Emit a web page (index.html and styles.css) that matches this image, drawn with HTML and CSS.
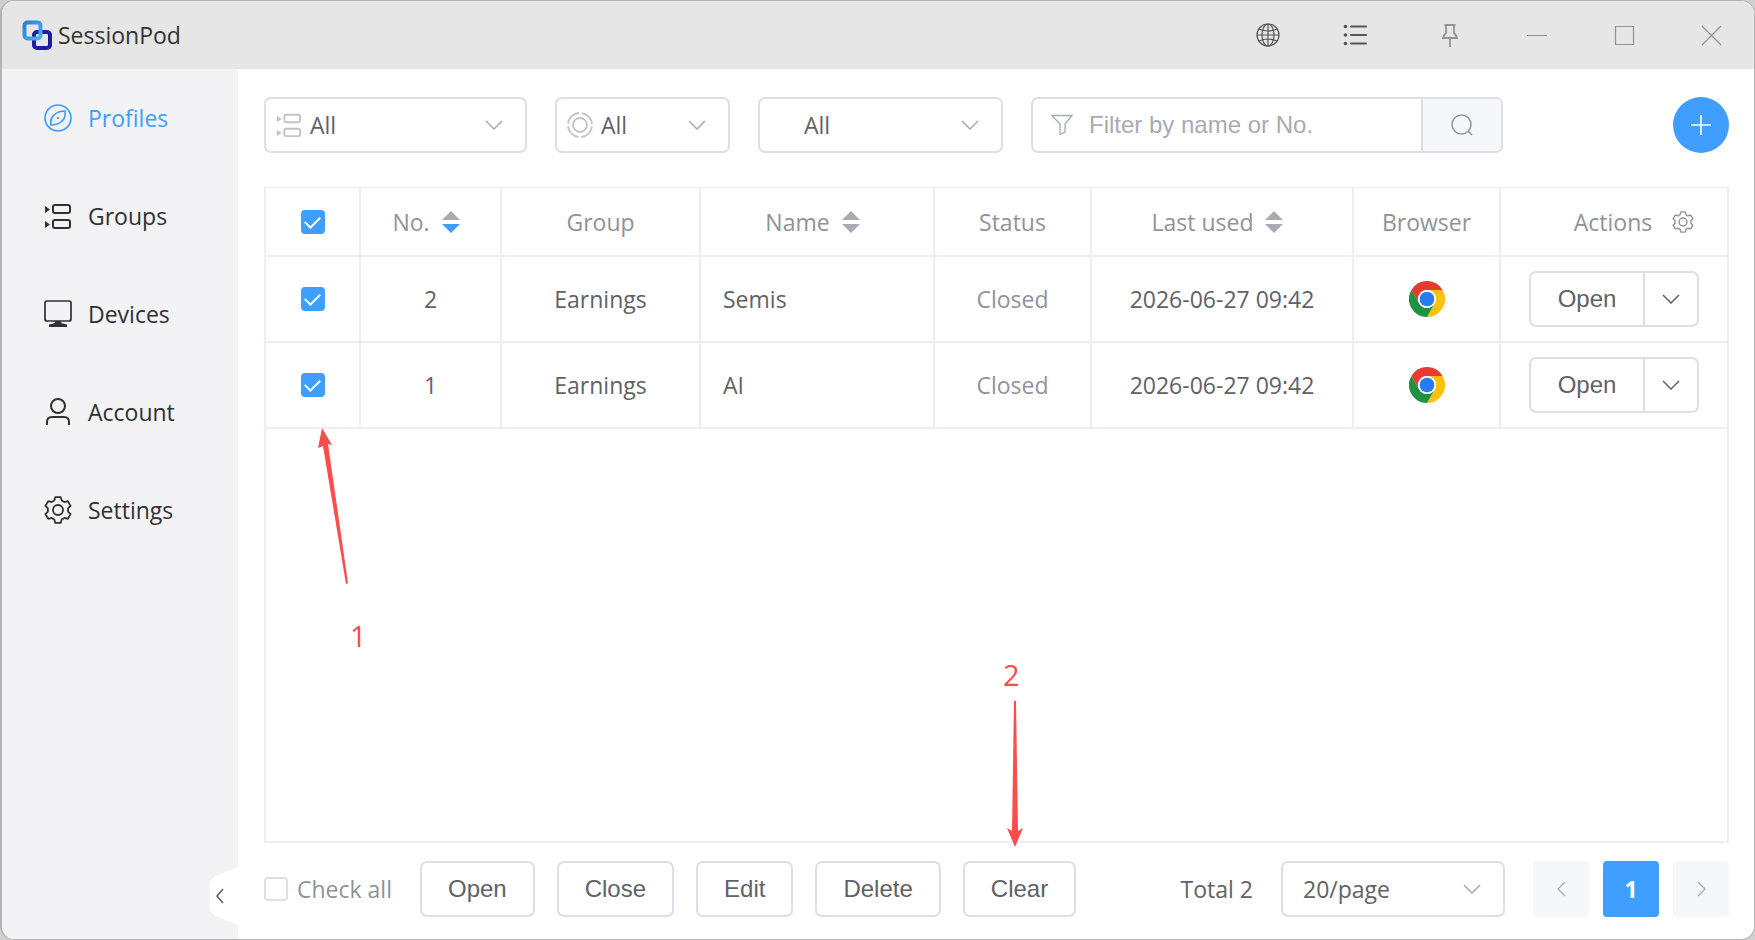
FILE: index.html
```html
<!DOCTYPE html>
<html lang="en">
<head>
    <meta charset="UTF-8">
    <meta name="viewport" content="width=device-width, initial-scale=1.0">
    <title>SessionPod</title>
    <link rel="stylesheet" href="styles.css">
</head>
<body>
    <!-- Shared icons -->
    <svg class="icon-defs" aria-hidden="true">
        <symbol id="icon-groups" viewBox="0 0 28 28">
            <path d="M1 4l5 3.500-5 3.500zM1 19l5 3.500-5 3.500z" fill="currentColor"/>
            <rect x="9" y="3" width="17" height="8" rx="2" fill="none" stroke="currentColor" stroke-width="2"/>
            <rect x="9" y="18" width="17" height="8" rx="2" fill="none" stroke="currentColor" stroke-width="2"/>
        </symbol>
        <symbol id="icon-gear" viewBox="0 0 28 28">
            <path d="M11.300 1.100h5.400l1 3.400 2.700 1.600 3.400-.9 2.800 4.700-2.500 2.500v3.200l2.500 2.500-2.800 4.700-3.400-.9-2.700 1.600-1 3.400h-5.400l-1-3.400-2.700-1.600-3.400.9-2.800-4.700 2.500-2.500v-3.200L1.400 9.900l2.800-4.700 3.400.9 2.700-1.600z" fill="none" stroke="currentColor" stroke-width="1.800" stroke-linejoin="round"/>
            <circle cx="14" cy="14" r="5" fill="none" stroke="currentColor" stroke-width="1.800"/>
        </symbol>
        <symbol id="icon-down" viewBox="0 0 18 10">
            <path d="M1 1l8 8 8-8" fill="none" stroke="currentColor" stroke-width="1.500"/>
        </symbol>
        <symbol id="icon-sort" viewBox="0 0 18 22">
            <path class="sort-up" d="M0 9l9-9 9 9z"/>
            <path class="sort-down" d="M0 13h18l-9 9z"/>
        </symbol>
        <symbol id="icon-chrome" viewBox="0 0 48 48">
            <path d="M3.200 12A24 24 0 0 1 44.800 12H24A12 12 0 0 0 13.600 30z" fill="#e63b2e"/>
            <path d="M44.800 12A24 24 0 0 1 24 48L34.400 30A12 12 0 0 0 24 12z" fill="#fcc013"/>
            <path d="M24 48A24 24 0 0 1 3.200 12L13.600 30A12 12 0 0 0 34.400 30z" fill="#1e9142"/>
            <circle cx="24" cy="24" r="12" fill="#fff"/>
            <circle cx="24" cy="24" r="9.800" fill="#2a7bf0"/>
        </symbol>
    </svg>

    <div class="window">
        <header class="titlebar">
            <svg class="logo" viewBox="0 0 30 30" aria-hidden="true">
                <defs>
                    <linearGradient id="logo-light" x1="0" y1="0" x2="1" y2="1">
                        <stop offset="0" stop-color="#2d7fd6"/>
                        <stop offset="1" stop-color="#45b4f2"/>
                    </linearGradient>
                </defs>
                <rect x="12" y="12" width="16" height="16" rx="3" fill="none" stroke="#1f1f9e" stroke-width="4"/>
                <rect x="2.500" y="2.500" width="16" height="16" rx="3" fill="none" stroke="url(#logo-light)" stroke-width="4"/>
            </svg>
            <h1>SessionPod</h1>
            <div class="title-tools">
                <button class="title-btn dark" aria-label="Language">
                    <svg width="24" height="24" viewBox="0 0 24 24" fill="none" stroke="currentColor" stroke-width="1.200">
                        <circle cx="12" cy="12" r="11"/>
                        <ellipse cx="12" cy="12" rx="6" ry="11"/>
                        <path d="M1 12h22M12 1v22M3 6q9 4 18 0M3 18q9-4 18 0"/>
                    </svg>
                </button>
                <button class="title-btn dark" aria-label="List">
                    <svg width="24" height="24" viewBox="0 0 24 24" stroke="currentColor" stroke-width="2" stroke-linecap="round">
                        <path d="M8 3.500h15M8 12h15M8 20.500h15"/>
                        <circle cx="2.500" cy="3.500" r=".8"/>
                        <circle cx="2.500" cy="12" r=".8"/>
                        <circle cx="2.500" cy="20.500" r=".8"/>
                    </svg>
                </button>
            </div>
            <button class="title-btn" aria-label="Pin">
                <svg width="24" height="24" viewBox="0 0 24 24" fill="none" stroke="currentColor" stroke-width="1.800">
                    <path d="M6.500 2h11M8 2v8q-2 2-3 5h14q-1-3-3-5V2M12 15v9"/>
                </svg>
            </button>
            <button class="title-btn" aria-label="Minimize">
                <svg width="24" height="24" viewBox="0 0 24 24" stroke="currentColor" stroke-width="1.200"><path d="M2 12.500h20"/></svg>
            </button>
            <button class="title-btn" aria-label="Maximize">
                <svg width="24" height="24" viewBox="0 0 24 24" fill="none" stroke="currentColor" stroke-width="1.200"><path d="M3.500 3.500h18v18h-18z"/></svg>
            </button>
            <button class="title-btn" aria-label="Close window">
                <svg width="24" height="24" viewBox="0 0 24 24" stroke="currentColor" stroke-width="1.200"><path d="M3 3l19 19M22 3L3 22"/></svg>
            </button>
        </header>

        <aside class="sidebar">
            <nav>
                <ul>
                    <li><a href="#profiles" class="active">
                        <svg viewBox="0 0 28 28" fill="none" stroke="currentColor" stroke-width="1.700">
                            <circle cx="14" cy="14" r="13"/>
                            <path d="M7 21q-1-7 3-10 4-4 11-4 1 7-3 10-4 4-11 4z"/>
                            <circle cx="14" cy="14" r=".8" fill="currentColor" stroke-width="1"/>
                        </svg>Profiles</a></li>
                    <li><a href="#groups"><svg><use href="#icon-groups"/></svg>Groups</a></li>
                    <li><a href="#devices">
                        <svg viewBox="0 0 28 28">
                            <rect x="1" y="1" width="26" height="20" rx="2" fill="none" stroke="currentColor" stroke-width="1.700"/>
                            <path d="M11 21h6v2l6 1.500V27H5v-2.500L11 23z" fill="currentColor"/>
                        </svg>Devices</a></li>
                    <li><a href="#account">
                        <svg viewBox="0 0 28 28" fill="none" stroke="currentColor" stroke-width="2">
                            <circle cx="14" cy="8" r="7"/>
                            <path d="M3 27v-3q0-5 5-5h12q5 0 5 5v3"/>
                        </svg>Account</a></li>
                    <li><a href="#settings"><svg><use href="#icon-gear"/></svg>Settings</a></li>
                </ul>
            </nav>
            <button class="collapse-btn" aria-label="Collapse sidebar">
                <svg width="8" height="16" viewBox="0 0 8 16" fill="none" stroke="currentColor" stroke-width="1.600"><path d="M7 1L1 8l6 7"/></svg>
            </button>
        </aside>

        <main>
            <div class="toolbar">
                <div class="select-box filter-group">
                    <svg class="lead"><use href="#icon-groups"/></svg>
                    <select aria-label="Group"><option>All</option></select>
                    <svg class="chevron"><use href="#icon-down"/></svg>
                </div>
                <div class="select-box filter-status">
                    <svg class="lead" viewBox="0 0 28 28" fill="none" stroke="currentColor" stroke-width="2">
                        <circle cx="14" cy="14" r="7.500"/>
                        <circle cx="14" cy="14" r="13" stroke-dasharray="17.420 3" stroke-dashoffset="-1.500"/>
                    </svg>
                    <select aria-label="Status"><option>All</option></select>
                    <svg class="chevron"><use href="#icon-down"/></svg>
                </div>
                <div class="select-box filter-browser">
                    <select aria-label="Browser"><option>All</option></select>
                    <svg class="chevron"><use href="#icon-down"/></svg>
                </div>
                <form class="search">
                    <svg width="22" height="22" viewBox="0 0 22 22" fill="none" stroke="currentColor" stroke-width="1.300">
                        <path d="M1 1.500h20L14 10v8l-5 2.500V10z"/>
                    </svg>
                    <input type="text" placeholder="Filter by name or No." aria-label="Filter by name or No.">
                    <button type="button" aria-label="Search">
                        <svg width="22" height="22" viewBox="0 0 22 22" fill="none" stroke="currentColor" stroke-width="1.500">
                            <circle cx="10.500" cy="10.500" r="9.500"/>
                            <path d="M17 17l4 4"/>
                        </svg>
                    </button>
                </form>
                <button class="add-btn" aria-label="Add profile">
                    <svg width="22" height="22" viewBox="0 0 22 22" stroke="currentColor" stroke-width="1.600"><path d="M11 1v20M1 11h20"/></svg>
                </button>
            </div>

            <div class="table-wrap">
                <table>
                    <colgroup>
                        <col class="col-check">
                        <col class="col-no">
                        <col class="col-group">
                        <col>
                        <col class="col-status">
                        <col class="col-used">
                        <col class="col-browser">
                        <col class="col-actions">
                    </colgroup>
                    <thead>
                        <tr>
                            <th><input type="checkbox" checked aria-label="Select all rows"></th>
                            <th><span class="sortable desc">No. <svg><use href="#icon-sort"/></svg></span></th>
                            <th>Group</th>
                            <th><span class="sortable">Name <svg><use href="#icon-sort"/></svg></span></th>
                            <th>Status</th>
                            <th><span class="sortable">Last used <svg><use href="#icon-sort"/></svg></span></th>
                            <th>Browser</th>
                            <th><span class="actions-head">Actions
                                <button aria-label="Column settings"><svg><use href="#icon-gear"/></svg></button>
                            </span></th>
                        </tr>
                    </thead>
                    <tbody>
                        <tr>
                            <td><input type="checkbox" checked aria-label="Select profile 2"></td>
                            <td>2</td>
                            <td>Earnings</td>
                            <td class="name">Semis</td>
                            <td class="closed">Closed</td>
                            <td>2026-06-27 09:42</td>
                            <td><svg class="browser" role="img" aria-label="Chrome"><use href="#icon-chrome"/></svg></td>
                            <td>
                                <div class="split-btn">
                                    <button>Open</button>
                                    <button aria-label="More actions"><svg class="chevron"><use href="#icon-down"/></svg></button>
                                </div>
                            </td>
                        </tr>
                        <tr>
                            <td><input type="checkbox" checked aria-label="Select profile 1"></td>
                            <td>1</td>
                            <td>Earnings</td>
                            <td class="name">AI</td>
                            <td class="closed">Closed</td>
                            <td>2026-06-27 09:42</td>
                            <td><svg class="browser" role="img" aria-label="Chrome"><use href="#icon-chrome"/></svg></td>
                            <td>
                                <div class="split-btn">
                                    <button>Open</button>
                                    <button aria-label="More actions"><svg class="chevron"><use href="#icon-down"/></svg></button>
                                </div>
                            </td>
                        </tr>
                    </tbody>
                </table>
            </div>

            <footer>
                <label class="check-all"><input type="checkbox"> Check all</label>
                <div class="bulk">
                    <button class="btn">Open</button>
                    <button class="btn">Close</button>
                    <button class="btn">Edit</button>
                    <button class="btn">Delete</button>
                    <button class="btn">Clear</button>
                </div>
                <span class="total">Total 2</span>
                <div class="select-box page-size">
                    <select aria-label="Page size"><option>20/page</option></select>
                    <svg class="chevron"><use href="#icon-down"/></svg>
                </div>
                <div class="pager">
                    <button disabled aria-label="Previous page">
                        <svg width="9" height="16" viewBox="0 0 9 16" fill="none" stroke="currentColor" stroke-width="1.300"><path d="M8 1L1 8l7 7"/></svg>
                    </button>
                    <button class="current">1</button>
                    <button disabled aria-label="Next page">
                        <svg width="9" height="16" viewBox="0 0 9 16" fill="none" stroke="currentColor" stroke-width="1.300"><path d="M1 1l7 7-7 7"/></svg>
                    </button>
                </div>
            </footer>
        </main>

        <!-- Step markers drawn over the window -->
        <div class="step step-one">
            <svg width="36" height="158" viewBox="0 0 36 158"><path d="M9 0l10 17-4-1L35 155l-2 1L10 18l-5 2z" fill="#fc4c4c"/></svg>
            <span>1</span>
        </div>
        <div class="step step-two">
            <span>2</span>
            <svg width="16" height="147" viewBox="0 0 16 147"><path d="M7 1h2l2 130 5-3-8 19-8-19 5 3z" fill="#fc4c4c"/></svg>
        </div>
    </div>
</body>
</html>
```
FILE: styles.css
```css
* {
    margin: 0;
    padding: 0;
    box-sizing: border-box;
}
body {
    font-family: "Open Sans", "Noto Sans", sans-serif;
    font-size: 23px;
    color: #606266;
    background-color: #d0d0d0;
}
button {
    font-family: "Liberation Sans", Arial, sans-serif;
    font-size: 24px;
    color: inherit;
    background: none;
    border: none;
    cursor: pointer;
}
svg {
    flex-shrink: 0;
}
.icon-defs {
    position: absolute;
    width: 0;
    height: 0;
}
.window {
    position: relative;
    height: 100vh;
    display: grid;
    grid-template-columns: 236px 1fr;
    grid-template-rows: 68px 1fr;
    background-color: #fff;
    border: 1px solid #b4b4b5;
    border-left-width: 2px;
    border-radius: 14px;
    overflow: hidden;
}

/* Title bar */
.titlebar {
    grid-column: 1 / -1;
    display: flex;
    align-items: center;
    padding-left: 20px;
    background-color: #e6e6e6;
}
.titlebar h1 {
    flex-grow: 1;
    margin-left: 6px;
    font-size: 23px;
    font-weight: normal;
    color: #333;
}
.logo {
    width: 30px;
    height: 30px;
}
.title-tools {
    display: flex;
    margin-right: 8px;
}
.title-btn {
    width: 87px;
    height: 68px;
    display: flex;
    align-items: center;
    justify-content: center;
    color: #909399;
}
.title-btn.dark {
    color: #555;
}

/* Sidebar */
.sidebar {
    position: relative;
    background-color: #f3f3f5;
}
.sidebar ul {
    list-style: none;
}
.sidebar a {
    display: flex;
    align-items: center;
    gap: 16px;
    height: 98px;
    padding-left: 42px;
    color: #303133;
    text-decoration: none;
}
.sidebar a.active {
    color: #409eff;
}
.sidebar a svg {
    width: 28px;
    height: 28px;
}
.collapse-btn {
    position: absolute;
    right: 0;
    bottom: 14px;
    width: 28px;
    height: 58px;
    padding-left: 6px;
    display: flex;
    align-items: center;
    background-color: #fff;
    clip-path: polygon(100% 0, 20% 16%, 5% 22%, 0 30%, 0 70%, 5% 78%, 20% 84%, 100% 100%);
}

/* Filters */
main {
    display: flex;
    flex-direction: column;
    min-width: 0;
    padding: 28px 25px 22px 26px;
}
.toolbar {
    display: flex;
    align-items: center;
    gap: 28px;
    margin-bottom: 34px;
}
.select-box {
    position: relative;
    height: 56px;
    border: 2px solid #dcdfe6;
    border-radius: 7px;
}
.select-box select {
    appearance: none;
    width: 100%;
    height: 100%;
    padding: 0 44px;
    font-family: inherit;
    font-size: 23px;
    color: #606266;
    background: none;
    border: none;
}
.select-box .lead {
    position: absolute;
    left: 10px;
    top: 13px;
    width: 26px;
    height: 26px;
    color: #c0c4cc;
    pointer-events: none;
}
.chevron {
    width: 18px;
    height: 10px;
}
.select-box .chevron {
    position: absolute;
    right: 22px;
    top: 21px;
    color: #a8abb2;
    pointer-events: none;
}
.filter-group {
    width: 263px;
}
.filter-status {
    width: 175px;
}
.filter-browser {
    width: 245px;
}
.search {
    width: 472px;
    height: 56px;
    display: flex;
    align-items: center;
    padding-left: 18px;
    color: #a8abb2;
    border: 2px solid #dcdfe6;
    border-radius: 7px;
    overflow: hidden;
}
.search input {
    flex: 1;
    min-width: 0;
    height: 100%;
    padding: 0 16px;
    font-family: "Liberation Sans", Arial, sans-serif;
    font-size: 24px;
    color: #606266;
    border: none;
    outline: none;
}
.search input::placeholder {
    color: #a8abb2;
}
.search button {
    width: 80px;
    height: 100%;
    display: flex;
    align-items: center;
    justify-content: center;
    color: #909399;
    background-color: #f5f7fa;
    border-left: 2px solid #dcdfe6;
}
.add-btn {
    width: 56px;
    height: 56px;
    margin-left: auto;
    display: flex;
    align-items: center;
    justify-content: center;
    color: #fff;
    background-color: #409eff;
    border-radius: 50%;
}

/* Profiles table */
.table-wrap {
    flex: 1;
    border: 2px solid #ebeef5;
    border-top-width: 1px;
}
table {
    width: 100%;
    table-layout: fixed;
    border-collapse: separate;
    border-spacing: 0;
}
.col-check {
    width: 95px;
}
.col-no {
    width: 141px;
}
.col-group {
    width: 199px;
}
.col-status {
    width: 157px;
}
.col-used {
    width: 262px;
}
.col-browser {
    width: 147px;
}
.col-actions {
    width: 226px;
}
th,
td {
    height: 86px;
    text-align: center;
    vertical-align: middle;
    border-right: 2px solid #ebeef5;
    border-bottom: 2px solid #ebeef5;
}
th {
    height: 69px;
    font-weight: normal;
    color: #909399;
}
th:last-child,
td:last-child {
    border-right: none;
}
td.name {
    padding-left: 22px;
    text-align: left;
}
td.closed {
    color: #909399;
}
.sortable,
.actions-head {
    display: flex;
    align-items: center;
    justify-content: center;
}
.sortable svg {
    width: 18px;
    height: 22px;
    margin: 0 9px 0 12px;
}
.sort-up {
    fill: #a8abb2;
}
.sort-down {
    fill: var(--sort-down, #a8abb2);
}
.desc {
    --sort-down: #409eff;
}
.actions-head {
    gap: 20px;
    padding-left: 40px;
}
.actions-head button {
    height: 22px;
    color: #909399;
}
.actions-head svg {
    display: block;
    width: 22px;
    height: 22px;
}
.browser {
    display: block;
    width: 36px;
    height: 36px;
    margin: 0 auto;
}
input[type="checkbox"] {
    appearance: none;
    display: grid;
    place-content: center;
    width: 24px;
    height: 24px;
    margin: 0 auto;
    background-color: #fff;
    border: 2px solid #dcdfe6;
    border-radius: 4px;
}
input[type="checkbox"]:checked {
    background-color: #409eff;
    border-color: #409eff;
}
input[type="checkbox"]:checked::before {
    content: "";
    width: 7px;
    height: 13px;
    margin-bottom: 3px;
    border: solid #fff;
    border-width: 0 2px 2px 0;
    transform: rotate(45deg);
}
.split-btn {
    display: inline-flex;
    height: 56px;
    vertical-align: middle;
    border: 2px solid #dcdfe6;
    border-radius: 7px;
}
.split-btn button {
    width: 112px;
}
.split-btn button + button {
    display: flex;
    align-items: center;
    justify-content: center;
    width: 54px;
    border-left: 2px solid #dcdfe6;
}

/* Footer */
footer {
    display: flex;
    align-items: center;
    margin-top: 18px;
}
.check-all {
    display: flex;
    align-items: center;
    gap: 9px;
    color: #909399;
}
.bulk {
    display: flex;
    gap: 22px;
    margin-left: 28px;
}
.btn {
    height: 56px;
    padding: 0 26px;
    border: 2px solid #dcdfe6;
    border-radius: 7px;
}
.total {
    margin-left: auto;
}
.page-size {
    width: 224px;
    margin: 0 28px;
}
.page-size select {
    padding: 0 20px;
}
.pager {
    display: flex;
    gap: 14px;
}
.pager button {
    width: 56px;
    height: 56px;
    display: flex;
    align-items: center;
    justify-content: center;
    color: #a8abb2;
    background-color: #f5f7fa;
    border-radius: 4px;
}
.pager .current {
    font-family: "Open Sans", "Noto Sans", sans-serif;
    font-size: 23px;
    font-weight: bold;
    color: #fff;
    background-color: #409eff;
}

/* Step markers */
.step {
    position: absolute;
    font-size: 29px;
    line-height: 36px;
    color: #fc4c4c;
    pointer-events: none;
}
.step svg,
.step span {
    display: block;
}
.step-one {
    left: 311px;
    top: 427px;
}
.step-one span {
    margin-top: 32px;
    padding-left: 37px;
}
.step-two {
    left: 1001px;
    top: 656px;
}
.step-two svg {
    margin: 7px 0 0 4px;
}
```
